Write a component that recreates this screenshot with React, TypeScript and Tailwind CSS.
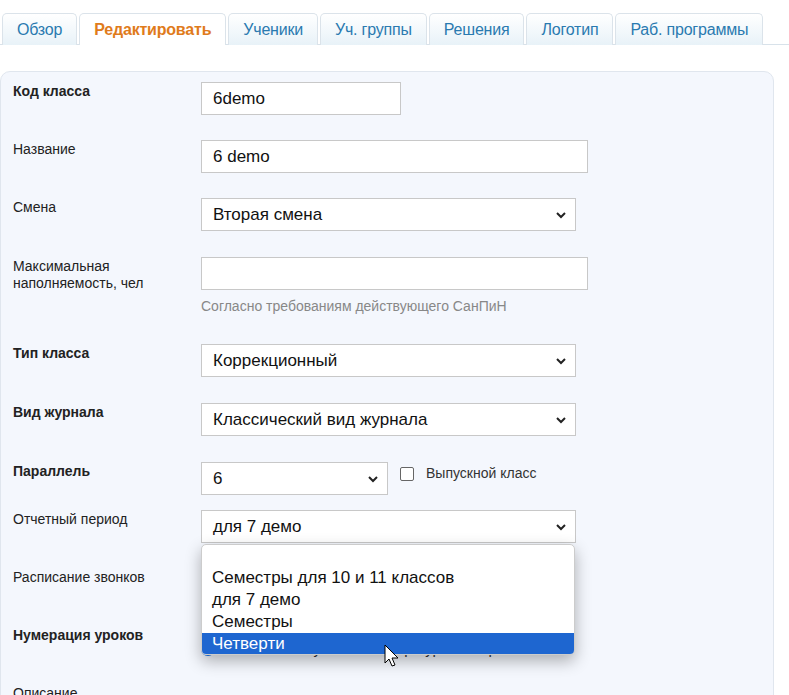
import React from 'react';

const tabs = ['Обзор', 'Редактировать', 'Ученики', 'Уч. группы', 'Решения', 'Логотип', 'Раб. программы'];

const Chevron = () => (
    <svg width="12" height="8" viewBox="0 0 12 8" className="absolute right-2 top-1/2 -translate-y-1/2">
        <path d="M2 2l4 4 4-4" fill="none" stroke="#222" strokeWidth="2"/>
    </svg>
);

const Select = ({ value, w }: { value: string; w: string }) => (
    <div className={`relative h-[33px] ${w} bg-white border border-[#c8c8c8] flex items-center px-[11px] text-[17px] text-[#111]`}>
        {value}
        <Chevron/>
    </div>
);

const Input = ({ value, w }: { value?: string; w: string }) => (
    <div className={`h-[33px] ${w} bg-white border border-[#c8c8c8] flex items-center px-[11px] text-[17px] text-[#111]`}>{value}</div>
);

const Row = ({ label, bold, h, children }: { label: React.ReactNode; bold?: boolean; h: string; children?: React.ReactNode }) => (
    <div className={`flex ${h}`}>
        <div className={`w-[188px] pt-[1px] text-[14px] leading-[17px] text-[#222] ${bold ? 'font-bold' : ''}`}>{label}</div>
        <div>{children}</div>
    </div>
);

export default function App() {
    return (
        <div className="w-[789px] h-[695px] overflow-hidden bg-white relative" style={{ fontFamily: '"Liberation Sans", Arial, sans-serif' }}>
            <div className="flex pt-[13px] border-b border-[#d8e2ea] h-[45px] pl-[2px] gap-[2px]">
                {tabs.map((t, i) => (
                    <div key={t}
                         className={`px-[14px] h-[32px] flex items-center text-[16px] rounded-t-[5px] border border-b-0 border-[#dbe3ea] tracking-[-0.2px] ${i === 1 ? 'bg-white text-[#e07b1b] font-bold' : 'bg-gradient-to-b from-white to-[#e8f2f8] text-[#2a7ab0]'}`}>
                        {t}
                    </div>
                ))}
            </div>
            <div className="mt-[26px] ml-0 w-[774px] h-[700px] rounded-[10px] border border-[#e0e6ee] bg-[#f4f7fd] pl-[12px] pt-[10px]">
                <Row label="Код класса" bold h="h-[58px]"><Input value="6demo" w="w-[200px]"/></Row>
                <Row label="Название" h="h-[58px]"><Input value="6 demo" w="w-[387px]"/></Row>
                <Row label="Смена" h="h-[59px]"><Select value="Вторая смена" w="w-[375px]"/></Row>
                <Row label={<>Максимальная<br/>наполняемость, чел</>} h="h-[87px]">
                    <Input w="w-[387px]"/>
                    <div className="text-[14px] text-[#888] mt-[6px]">Согласно требованиям действующего СанПиН</div>
                </Row>
                <Row label="Тип класса" bold h="h-[59px]"><Select value="Коррекционный" w="w-[375px]"/></Row>
                <Row label="Вид журнала" bold h="h-[59px]"><Select value="Классический вид журнала" w="w-[375px]"/></Row>
                <Row label="Параллель" bold h="h-[48px]">
                    <div className="flex items-start gap-[12px]">
                        <Select value="6" w="w-[187px]"/>
                        <div className="flex items-center gap-[12px] pt-[1px] text-[14px] text-[#333]">
                            <span className="w-[14px] h-[14px] border border-[#666] rounded-[2px] bg-white"/>Выпускной класс
                        </div>
                    </div>
                </Row>
                <Row label="Отчетный период" h="h-[58px]"><Select value="для 7 демо" w="w-[375px]"/></Row>
                <Row label="Расписание звонков" h="h-[58px]"/>
                <Row label="Нумерация уроков" bold h="h-[58px]">
                    <div className="flex items-center gap-[8px] pt-[12px] text-[15px] text-[#333]">
                        <span className="w-[14px] h-[14px] rounded-full border-2 border-[#1a73e8]"/>
                        Выключить нулевые номера уроков в расписании
                    </div>
                </Row>
                <Row label="Описание" h="h-[58px]"/>
            </div>
            <div className="absolute left-[201px] top-[544px] w-[374px] h-[111px] bg-white rounded-[5px] border border-[#ccc] shadow-[0_6px_16px_rgba(0,0,0,0.3)] overflow-hidden pt-[22px] text-[17px] leading-[22px] text-[#111]">
                <div className="px-[10px]">Семестры для 10 и 11 классов</div>
                <div className="px-[10px]">для 7 демо</div>
                <div className="px-[10px]">Семестры</div>
                <div className="px-[10px] bg-[#1e66d0] text-white">Четверти</div>
            </div>
            <svg width="16" height="24" viewBox="0 0 16 24" className="absolute left-[384px] top-[644px]">
                <path d="M1 1v18l4-4 3 7 3-1-3-7h6z" fill="#fff" stroke="#000" strokeWidth="1"/>
            </svg>
        </div>
    );
}
